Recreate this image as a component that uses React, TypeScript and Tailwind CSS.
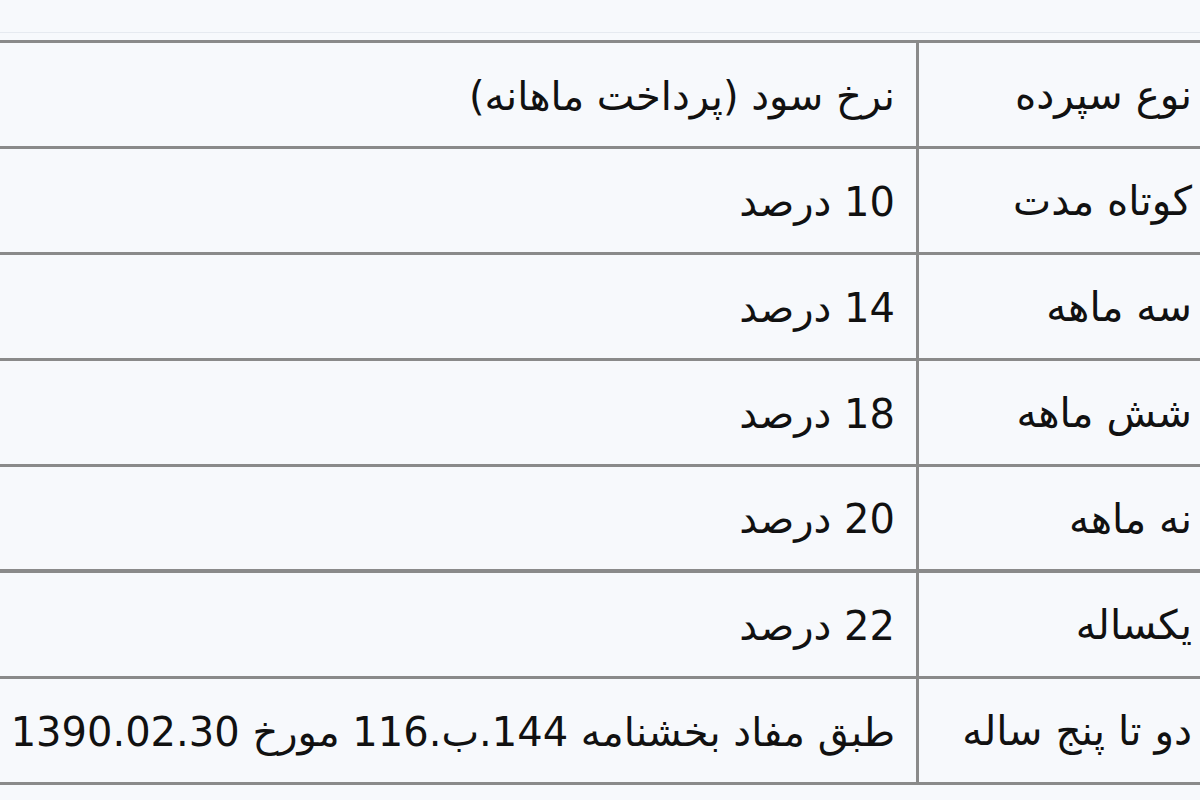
import React from "react";

const rows: [string, string][] = [
  ["نوع سپرده", "نرخ سود (پرداخت ماهانه)"],
  ["کوتاه مدت", "10 درصد"],
  ["سه ماهه", "14 درصد"],
  ["شش ماهه", "18 درصد"],
  ["نه ماهه", "20 درصد"],
  ["یکساله", "22 درصد"],
  ["دو تا پنج ساله", "طبق مفاد بخشنامه 144.ب.116 مورخ 1390.02.30"],
];

export default function App() {
  return (
    <div
      className="w-[1200px] h-[800px] overflow-hidden bg-[#f7f9fc] text-[#111]"
      style={{ fontFamily: '"DejaVu Sans", sans-serif' }}
    >
      <div className="h-[33px] border-b border-[#e6eaf0]" />
      <div dir="rtl" className="mt-[7px] mr-[-16px] border-t-[3px] border-[#8a8a8a]">
        {rows.map(([a, b], i) => (
          <div
            key={i}
            className={
              i === 4
                ? "flex h-[106px] border-b-[4px] border-[#8a8a8a]"
                : "flex h-[106px] border-b-[3px] border-[#8a8a8a]"
            }
          >
            <div className="w-[300px] shrink-0 border-l-[3px] border-[#8a8a8a] flex items-center pt-[2px] pr-[24px] text-[40.5px] whitespace-nowrap">
              {a}
            </div>
            <div className="flex-1 flex items-center pt-[2px] pr-[21px] text-[40px] whitespace-nowrap">
              {b}
            </div>
          </div>
        ))}
      </div>
    </div>
  );
}
